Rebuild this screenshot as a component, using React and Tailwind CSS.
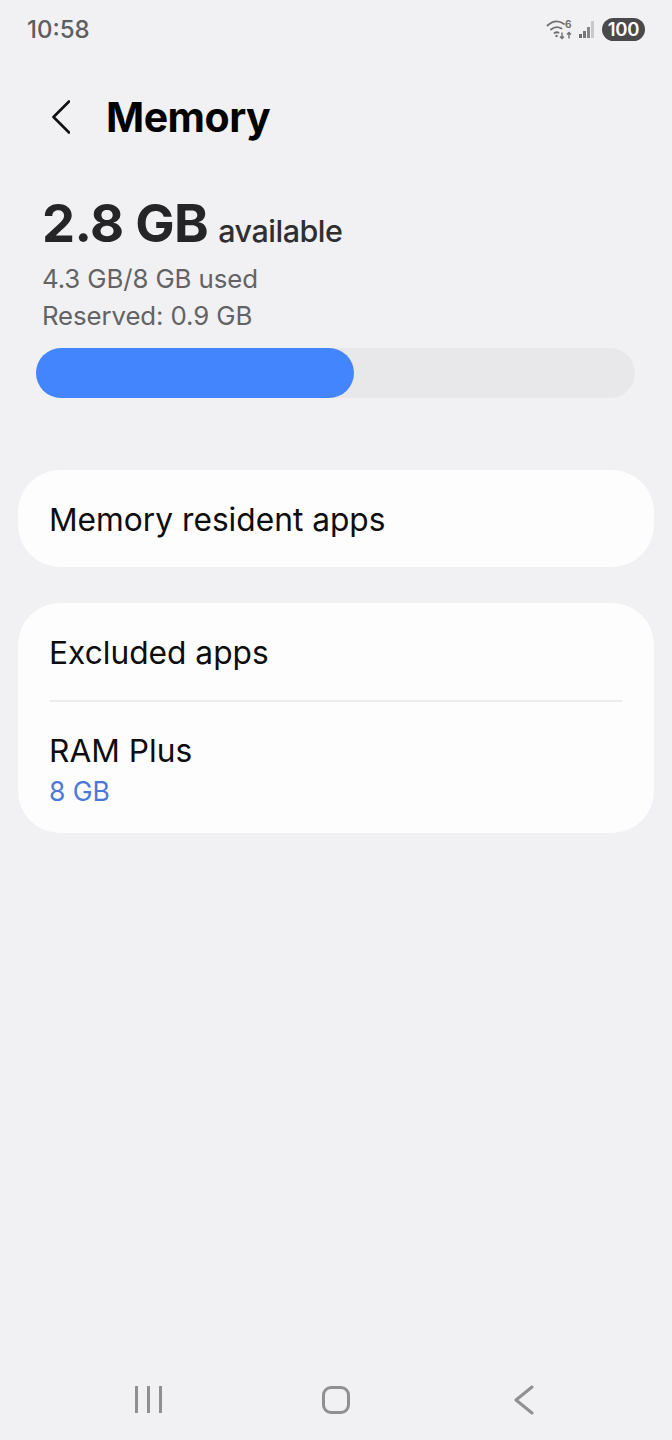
import React from "react";

function StatusIcons() {
  return (
    <div className="flex items-center gap-[5px]">
      {/* wifi 6 */}
      <svg width="28" height="22" viewBox="0 0 28 22" fill="none" stroke="#6f6f72" className="-ml-[2px]">
        <path d="M1.5 7.5C7 2.5 13 2.5 18 6" strokeWidth="1.8" strokeLinecap="round" />
        <path d="M5 11.5C8.5 8.5 12 8.5 15.5 10.5" strokeWidth="1.8" strokeLinecap="round" />
        <path d="M8.5 15C10 14 11 14 12.5 14.6" strokeWidth="1.8" strokeLinecap="round" />
        <circle cx="10.5" cy="18" r="1.2" fill="#6f6f72" stroke="none" />
        <path d="M16 20.5V14.5M14 18.5l2 2 2-2" strokeWidth="1.4" />
        <path d="M23 20.5V14.5M21 16.5l2-2 2 2" strokeWidth="1.4" />
        <text x="19" y="10" fontSize="10" fontWeight="700" fill="#6f6f72" stroke="none" fontFamily="Inter, sans-serif">6</text>
      </svg>
      {/* signal */}
      <div className="flex items-end gap-[1px] h-[17px] mt-[1px]">
        <div className="w-[3px] h-[4px] bg-[#6f6f72]" />
        <div className="w-[3px] h-[7px] bg-[#77777a]" />
        <div className="w-[3px] h-[11px] bg-[#85858a]" />
        <div className="w-[3px] h-[17px] bg-[#c9c9cc]" />
      </div>
      <div className="ml-[3px] w-[43px] h-[23px] rounded-full bg-[#4a4a4c] text-white text-[18.5px] font-semibold leading-[23px] text-center tracking-[-0.2px]">
        100
      </div>
    </div>
  );
}

function Row({ title, className }) {
  return (
    <div className={className}>
      <div className="-ml-[1px] text-[31.7px] leading-[38px] text-[#0d0d0d]">{title}</div>
    </div>
  );
}

export default function App() {
  return (
    <div
      className="w-[672px] h-[1440px] bg-[#f1f1f3] flex flex-col overflow-hidden"
      style={{ fontFamily: "Inter, 'Noto Sans', sans-serif" }}
    >
      {/* Status bar */}
      <div className="h-[58px] shrink-0 flex items-center justify-between pl-[27px] pr-[27px]">
        <span className="mt-[1px] text-[24px] font-medium text-[#5e5e60]">10:58</span>
        <StatusIcons />
      </div>

      {/* Header */}
      <div className="h-[118px] shrink-0 flex items-center pl-[52px]">
        <svg width="18" height="34" viewBox="0 0 18 34" fill="none" stroke="#111" strokeWidth="2.6" strokeLinecap="round" strokeLinejoin="round">
          <path d="M17 1.5L1.5 17L17 32.5" />
        </svg>
        <h1 className="ml-[36px] text-[41px] font-bold text-black leading-none tracking-[-0.5px]">Memory</h1>
      </div>

      {/* Summary */}
      <div className="px-[42px] pt-[15px] shrink-0">
        <div className="flex items-baseline gap-[10px] h-[64px]">
          <span className="text-[52.5px] leading-[64px] font-bold text-[#252527] tracking-[-0.6px]">2.8 GB</span>
          <span className="text-[30.5px] font-medium text-[#2f2f31] tracking-[-0.5px]">available</span>
        </div>
        <div className="mt-[5px] text-[25.8px] leading-[37px] text-[#636365] tracking-[-0.1px]">
          <div>4.3 GB/8 GB used</div>
          <div>Reserved: 0.9 GB</div>
        </div>
      </div>

      {/* Progress bar */}
      <div className="ml-[36px] mt-[14px] w-[599px] h-[50px] rounded-full bg-[#e8e8ea] shrink-0">
        <div className="w-[318px] h-full rounded-full bg-[#4285fd]" />
      </div>

      {/* Cards */}
      <div className="mx-[18px] mt-[72px] h-[97px] rounded-[42px] bg-[#fdfdfe] flex items-center pt-[2px] px-[32px] shrink-0">
        <Row title="Memory resident apps" />
      </div>

      <div className="mx-[18px] mt-[36px] h-[230px] rounded-[42px] bg-[#fdfdfe] px-[32px] shrink-0">
        <Row title="Excluded apps" className="h-[99px] pt-[31px] border-b-2 border-[#ececee]" />
        <Row title="RAM Plus" className="pt-[30px]" />
        <div className="-ml-[1px] text-[26.5px] leading-[30px] mt-[6px] text-[#4b78d8]">8 GB</div>
      </div>

      {/* Nav bar */}
      <div className="mt-auto h-[80px] shrink-0 pb-[1px] flex items-center pl-[135px]">
        <div className="flex gap-[9px] h-[27px]">
          <div className="w-[3px] bg-[#909093]" />
          <div className="w-[3px] bg-[#909093]" />
          <div className="w-[3px] bg-[#909093]" />
        </div>
        <div className="ml-[160px] w-[28px] h-[28px] rounded-[9px] border-[3px] border-[#909093]" />
        <svg className="ml-[164px]" width="20" height="30" viewBox="0 0 20 30" fill="none" stroke="#909093" strokeWidth="3" strokeLinecap="round" strokeLinejoin="round">
          <path d="M18 2L2 15L18 28" />
        </svg>
      </div>
    </div>
  );
}
